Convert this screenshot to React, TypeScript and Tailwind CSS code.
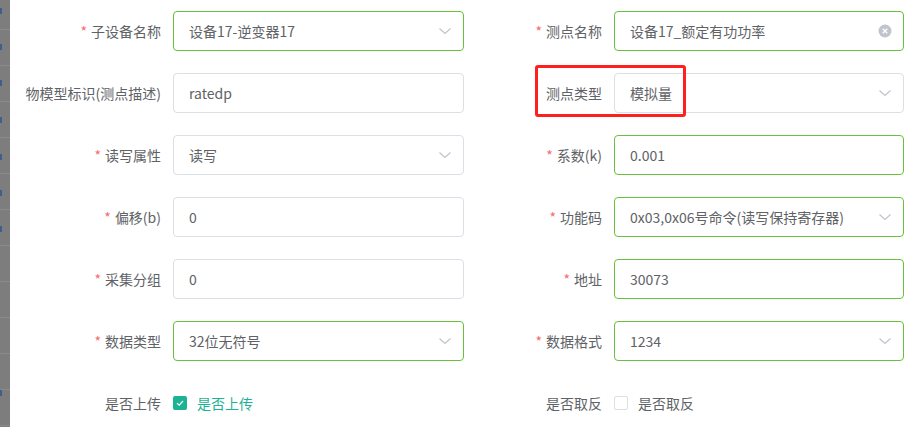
import React from "react";

type Field = {
  label: string;
  required?: boolean;
  value: string;
  kind: "input" | "select" | "clear";
  success?: boolean;
};

const left: Field[] = [
  { label: "子设备名称", required: true, value: "设备17-逆变器17", kind: "select", success: true },
  { label: "物模型标识(测点描述)", value: "ratedp", kind: "input" },
  { label: "读写属性", required: true, value: "读写", kind: "select" },
  { label: "偏移(b)", required: true, value: "0", kind: "input" },
  { label: "采集分组", required: true, value: "0", kind: "input" },
  { label: "数据类型", required: true, value: "32位无符号", kind: "select", success: true },
];

const right: Field[] = [
  { label: "测点名称", required: true, value: "设备17_额定有功功率", kind: "clear", success: true },
  { label: "测点类型", value: "模拟量", kind: "select" },
  { label: "系数(k)", required: true, value: "0.001", kind: "input", success: true },
  { label: "功能码", required: true, value: "0x03,0x06号命令(读写保持寄存器)", kind: "select", success: true },
  { label: "地址", required: true, value: "30073", kind: "input", success: true },
  { label: "数据格式", required: true, value: "1234", kind: "select", success: true },
];

function Chevron() {
  return (
    <svg width="14" height="14" viewBox="0 0 14 14" className="absolute right-[11px] top-1/2 -translate-y-1/2">
      <polyline points="1.5,4.5 7,9.5 12.5,4.5" fill="none" stroke="#c0c4cc" strokeWidth="1.2" />
    </svg>
  );
}

function ClearIcon() {
  return (
    <svg width="14" height="14" viewBox="0 0 14 14" className="absolute right-[11px] top-1/2 -translate-y-1/2">
      <circle cx="7" cy="7" r="6.5" fill="#c0c4cc" />
      <path d="M4.7 4.7 L9.3 9.3 M9.3 4.7 L4.7 9.3" stroke="#fff" strokeWidth="1.3" />
    </svg>
  );
}

function FormItem({ f, inputW }: { f: Field; inputW: string }) {
  return (
    <div className="flex items-center h-10 mb-[22px]">
      <div className="w-[150px] pr-3 text-right text-[14px] text-[#606266] shrink-0 whitespace-nowrap">
        {f.required && <span className="text-[#f56c6c] mr-1">*</span>}
        {f.label}
      </div>
      <div
        className={`relative h-10 ${inputW} rounded border ${
          f.success ? "border-[#67c23a]" : "border-[#dcdfe6]"
        } bg-white flex items-center pl-[15px] text-[14px] text-[#606266]`}
      >
        <span className="whitespace-nowrap">{f.value}</span>
        {f.kind === "select" && <Chevron />}
        {f.kind === "clear" && <ClearIcon />}
      </div>
    </div>
  );
}

export default function App() {
  const marks = [10, 46, 82, 118, 154, 190, 226, 262, 298, 334, 370, 406];
  return (
    <div className="w-[917px] h-[427px] overflow-hidden bg-white flex font-['Microsoft_YaHei','Noto_Sans_CJK_SC',sans-serif]">
      <div className="relative w-[10px] h-full bg-[#7d7d7d] shrink-0 overflow-hidden">
        {marks.map((y, i) => (
          <div key={i} className="absolute left-0 w-[10px] h-px bg-[#8a8a8a]" style={{ top: y + 19 }} />
        ))}
        {[8, 44, 80, 117, 154, 190, 226, 390].map((y, i) => (
          <div key={"b" + i} className="absolute left-0 w-[2px] h-[6px] bg-[#3f5f8a]" style={{ top: y }} />
        ))}
      </div>
      <div className="relative flex-1 pl-[13px] pt-[11px]">
        <div className="grid grid-cols-[441px_440px]">
          <div>
            {left.map((f, i) => (
              <FormItem key={i} f={f} inputW="w-[291px]" />
            ))}
            <div className="flex items-center h-10">
              <div className="w-[150px] pr-3 text-right text-[14px] text-[#606266]">是否上传</div>
              <div className="flex items-center">
                <span className="w-[14px] h-[14px] rounded-[2px] bg-[#1ab394] flex items-center justify-center">
                  <svg width="10" height="10" viewBox="0 0 10 10">
                    <polyline points="2,5.2 4.2,7.2 8,3" fill="none" stroke="#fff" strokeWidth="1.3" />
                  </svg>
                </span>
                <span className="ml-[10px] text-[14px] text-[#1ab394]">是否上传</span>
              </div>
            </div>
          </div>
          <div>
            {right.map((f, i) => (
              <FormItem key={i} f={f} inputW="w-[290px]" />
            ))}
            <div className="flex items-center h-10">
              <div className="w-[150px] pr-3 text-right text-[14px] text-[#606266]">是否取反</div>
              <div className="flex items-center">
                <span className="w-[14px] h-[14px] rounded-[2px] border border-[#dcdfe6] bg-white" />
                <span className="ml-[10px] text-[14px] text-[#606266]">是否取反</span>
              </div>
            </div>
          </div>
        </div>
        <div className="absolute left-[525px] top-[65px] w-[151px] h-[52px] border-[3px] border-[#ff1f1f] rounded-[3px] pointer-events-none" />
      </div>
    </div>
  );
}
